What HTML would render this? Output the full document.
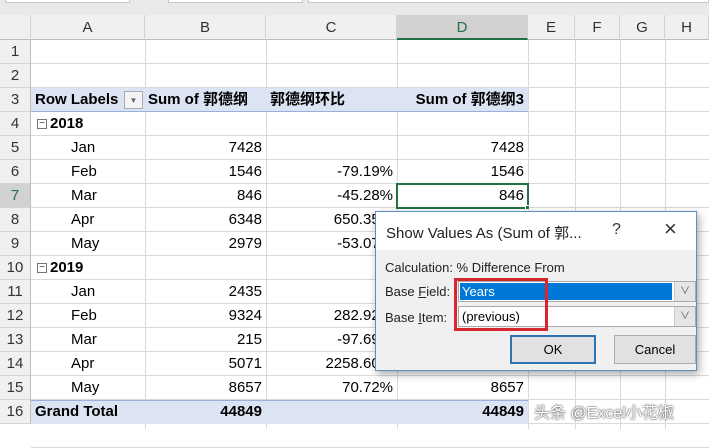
<!DOCTYPE html><html><head><style>
body{margin:0;width:709px;height:427px;overflow:hidden;background:#fff;font-family:"Liberation Sans","Noto Sans CJK SC",sans-serif;position:relative}
.a{position:absolute;box-sizing:border-box}
.ch{top:15px;height:25px;background:#f0f0f0;border-right:1px solid #d4d4d4;border-bottom:1px solid #bdbdbd;text-align:center;font-size:15px;line-height:25px;color:#333}
.rh{left:0;width:31px;height:24px;background:#f0f0f0;border-bottom:1px solid #d4d4d4;border-right:1px solid #bdbdbd;text-align:center;font-size:15px;line-height:24px;color:#333}
.vl{top:40px;height:389px;width:1px;background:#d9d9d9}
.hl{left:31px;width:678px;height:1px;background:#d9d9d9}
.c{height:24px;font-size:15px;line-height:24px;white-space:nowrap;color:#000}
.r{text-align:right}
.b{font-weight:bold}
</style></head><body>
<div class="a" style="left:0;top:0;width:709px;height:15px;background:#e9e9e9"></div>
<div class="a" style="left:5px;top:0;width:125px;height:3px;background:#fff;border:1px solid #c8c8c8;border-top:none"></div>
<div class="a" style="left:168px;top:0;width:135px;height:3px;background:#fff;border:1px solid #c8c8c8;border-top:none"></div>
<div class="a" style="left:308px;top:0;width:401px;height:3px;background:#fff;border:1px solid #c8c8c8;border-top:none"></div>
<div class="a ch" style="left:0;width:31px"></div>
<div class="a ch" style="left:31px;width:114px">A</div>
<div class="a ch" style="left:145px;width:121px">B</div>
<div class="a ch" style="left:266px;width:131px">C</div>
<div class="a ch" style="left:397px;width:131px;background:#d2d2d2;border-bottom:2px solid #217346;color:#217346">D</div>
<div class="a ch" style="left:528px;width:47px">E</div>
<div class="a ch" style="left:575px;width:45px">F</div>
<div class="a ch" style="left:620px;width:45px">G</div>
<div class="a ch" style="left:665px;width:44px">H</div>
<div class="a vl" style="left:145px"></div><div class="a vl" style="left:266px"></div><div class="a vl" style="left:397px"></div><div class="a vl" style="left:528px"></div><div class="a vl" style="left:575px"></div><div class="a vl" style="left:620px"></div><div class="a vl" style="left:665px"></div>
<div id="rows"></div>
<div class="a" style="left:31px;top:88px;width:497px;height:24px;background:#dce3f2;border-bottom:1px solid #9bb0d9"></div>
<div class="a" style="left:31px;top:400px;width:497px;height:24px;background:#dce3f2;border-top:1px solid #9bb0d9"></div>
<script>
var h='';for(var n=1;n<=17;n++){var t=40+24*(n-1);h+='<div class="a hl" style="top:'+(t+23)+'px"></div>';if(n<17)h+='<div class="a rh" style="top:'+t+'px;'+(n==7?'background:#d2d2d2;color:#217346':'')+'">'+n+'</div>';}
document.getElementById('rows').innerHTML=h;
</script>
<div class="a c b" style="left:35px;top:88px">Row Labels</div>
<div class="a" style="left:124px;top:91px;width:19px;height:18px;background:#f4f4f4;border:1px solid #aab;font-size:8px;text-align:center;line-height:17px;color:#666">▼</div>
<div class="a c b" style="left:148px;top:88px">Sum of 郭德纲</div>
<div class="a c b" style="left:270px;top:88px">郭德纲环比</div>
<div class="a c b r" style="left:397px;top:88px;width:127px">Sum of 郭德纲3</div>
<div id="d"></div>
<script>
var R=[[4,'2018','','',''],[5,'Jan','7428','','7428'],[6,'Feb','1546','-79.19%','1546'],[7,'Mar','846','-45.28%','846'],[8,'Apr','6348','650.35%','6348'],[9,'May','2979','-53.07%','2979'],[10,'2019','','',''],[11,'Jan','2435','','2435'],[12,'Feb','9324','282.92%','9324'],[13,'Mar','215','-97.69%','215'],[14,'Apr','5071','2258.60%','5071'],[15,'May','8657','70.72%','8657'],[16,'Grand Total','44849','','44849']];
var s='';R.forEach(function(r){var t=40+24*(r[0]-1);var yr=r[0]==4||r[0]==10,gt=r[0]==16;
if(yr)s+='<div class="a" style="left:37px;top:'+(t+7)+'px;width:10px;height:10px;border:1px solid #777;font-size:10px;line-height:8px;text-align:center;color:#333">−</div><div class="a c b" style="left:50px;top:'+t+'px">'+r[1]+'</div>';
else s+='<div class="a c'+(gt?' b':'')+'" style="left:'+(gt?35:71)+'px;top:'+t+'px">'+r[1]+'</div>';
s+='<div class="a c r'+(gt?' b':'')+'" style="left:145px;width:117px;top:'+t+'px">'+r[2]+'</div>';
s+='<div class="a c r" style="left:266px;width:127px;top:'+t+'px">'+r[3]+'</div>';
s+='<div class="a c r'+(gt?' b':'')+'" style="left:397px;width:127px;top:'+t+'px">'+r[4]+'</div>';});
document.getElementById('d').innerHTML=s;
</script>
<div class="a" style="left:396px;top:183px;width:133px;height:26px;border:2px solid #217346"></div>
<div class="a" style="left:525px;top:205px;width:5px;height:5px;background:#217346;border:1px solid #fff"></div>
<div class="a" style="left:375px;top:211px;width:322px;height:160px;background:#f0f0f0;border:1px solid #5d8fbf;box-shadow:2px 3px 8px rgba(0,0,0,.35)">
<div class="a" style="left:0;top:0;width:320px;height:38px;background:#fff"></div>
<div class="a" style="left:10px;top:10px;font-size:15px;color:#222">Show Values As (Sum of 郭...</div>
<div class="a" style="left:236px;top:9px;font-size:16px;color:#333">?</div>
<div class="a" style="left:288px;top:4px;font-size:22px;color:#333;font-weight:300">×</div>
<div class="a" style="left:9px;top:48px;font-size:13px;color:#222">Calculation: % Difference From</div>
<div class="a" style="left:9px;top:72px;font-size:13px;color:#222">Base <u>F</u>ield:</div>
<div class="a" style="left:9px;top:98px;font-size:13px;color:#222">Base <u>I</u>tem:</div>
<div class="a" style="left:82px;top:69px;width:238px;height:21px;background:#fff;border:1px solid #aaa"><div class="a" style="left:1px;top:1px;width:212px;height:17px;background:#0078d7;color:#fff;font-size:13px;line-height:17px;padding-left:2px">Years</div><div class="a" style="right:0;top:0;width:21px;height:19px;background:#e5e5e5;border-left:1px solid #ccc;font-size:10px;text-align:center;line-height:19px;color:#555">∨</div></div>
<div class="a" style="left:82px;top:94px;width:238px;height:21px;background:#fff;border:1px solid #aaa;font-size:13px;line-height:19px;padding-left:3px">(previous)<div class="a" style="right:0;top:0;width:21px;height:19px;background:#e5e5e5;border-left:1px solid #ccc;font-size:10px;text-align:center;line-height:19px;color:#555">∨</div></div>
<div class="a" style="left:78px;top:66px;width:94px;height:53px;border:3px solid #d6262e"></div>
<div class="a" style="left:134px;top:123px;width:86px;height:29px;background:#e1e1e1;border:2px solid #2a73b5;text-align:center;line-height:25px;font-size:13px">OK</div>
<div class="a" style="left:238px;top:123px;width:82px;height:29px;background:#e1e1e1;border:1px solid #adadad;text-align:center;line-height:27px;font-size:13px">Cancel</div>
</div>
<div class="a" style="left:534px;top:399px;font-size:16px;color:#fff;text-shadow:0 0 2px #555,0 0 1px #333;white-space:nowrap">头条 @Excel小花椒</div>
</body></html>
